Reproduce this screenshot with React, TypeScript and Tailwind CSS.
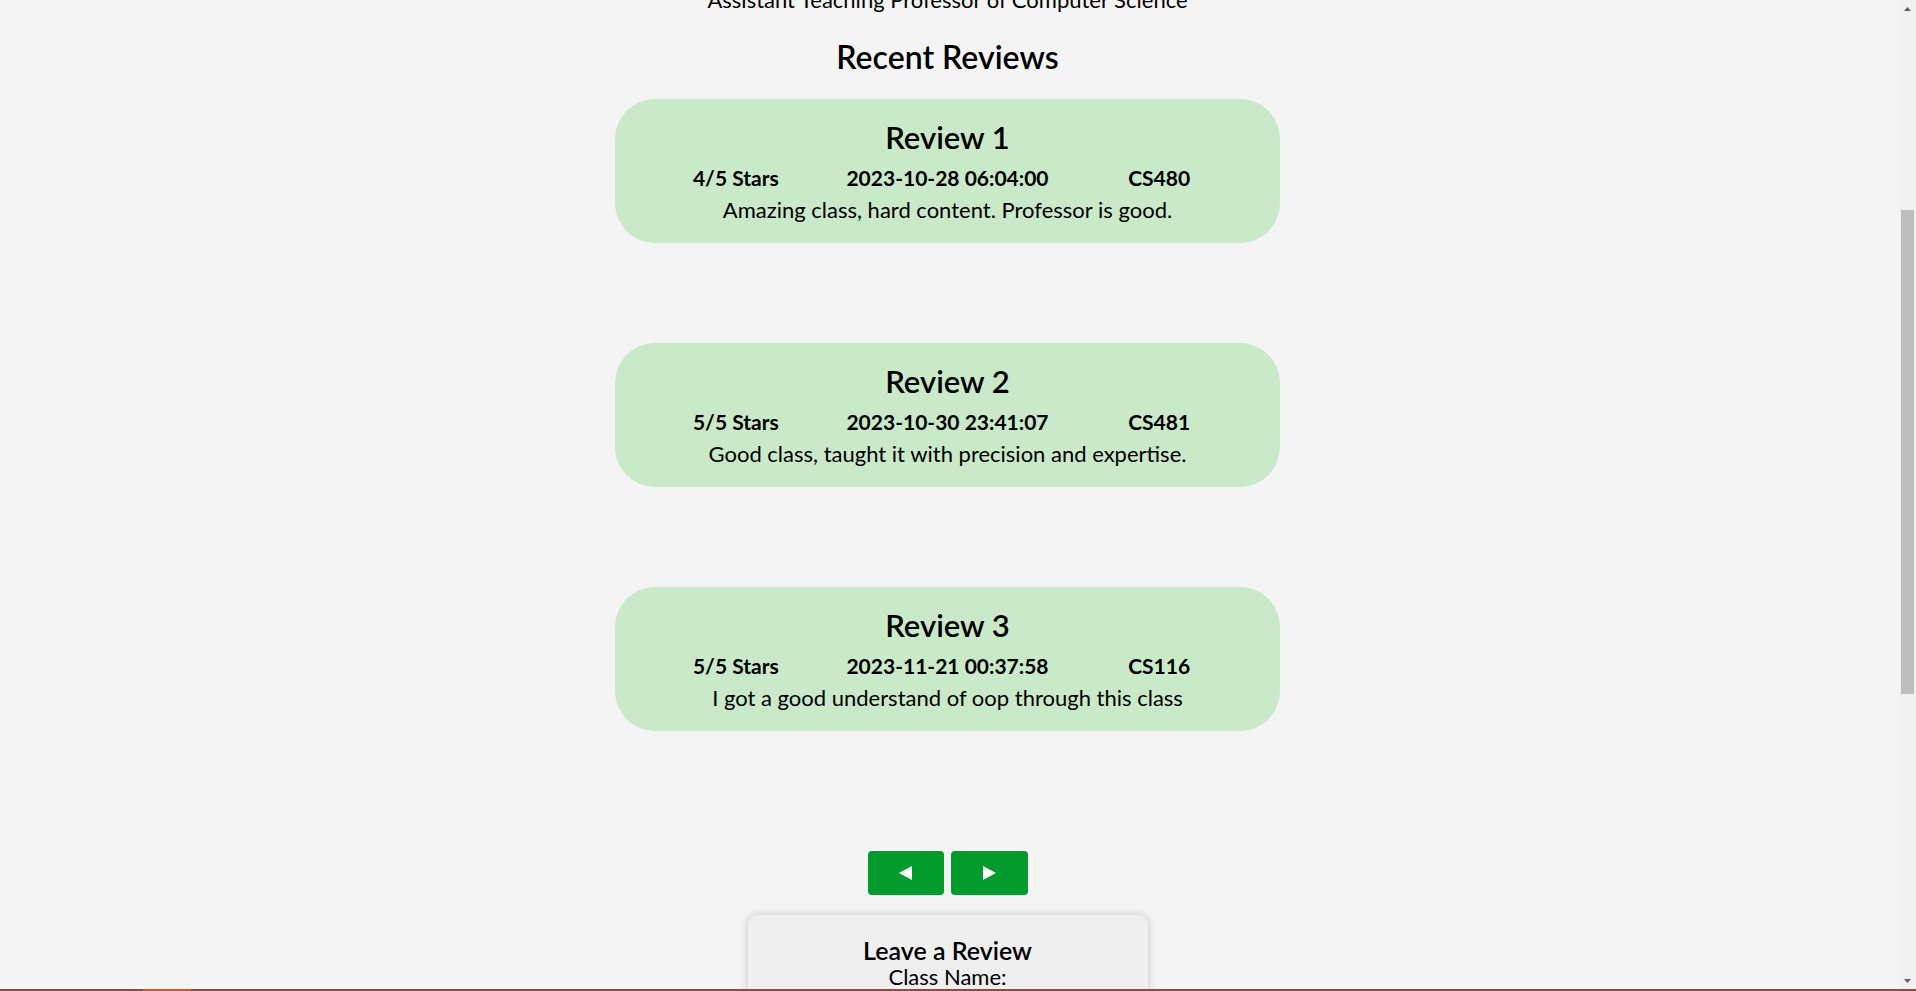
import { useLayoutEffect, useRef } from 'react';

const reviews = [
  { title: 'Review 1', stars: '4/5 Stars', date: '2023-10-28 06:04:00', course: 'CS480', text: 'Amazing class, hard content. Professor is good.' },
  { title: 'Review 2', stars: '5/5 Stars', date: '2023-10-30 23:41:07', course: 'CS481', text: 'Good class, taught it with precision and expertise.' },
  { title: 'Review 3', stars: '5/5 Stars', date: '2023-11-21 00:37:58', course: 'CS116', text: 'I got a good understand of oop through this class' },
];

function ReviewCard({ review }: { review: (typeof reviews)[number] }) {
  return (
    <div className="w-[665px] rounded-[40px] bg-[#c9e9c9] px-[15px] pt-[19px] pb-[20px] text-center text-black">
      <h3 className="text-[31px] leading-[38px] font-semibold">{review.title}</h3>
      <div className="mt-[10px] grid grid-cols-3 text-[21px] leading-[24px] font-bold">
        <span>{review.stars}</span>
        <span>{review.date}</span>
        <span>{review.course}</span>
      </div>
      <p className="mt-[7px] text-[22px] leading-[26px]">{review.text}</p>
    </div>
  );
}

function Scrollbar() {
  return (
    <div className="w-[17px] bg-[#f1f1f1] flex flex-col">
      <div className="h-[17px] flex items-center justify-center">
        <svg width="7" height="4" viewBox="0 0 7 4">
          <path d="M3.5 0 L7 4 L0 4 Z" fill="#606060" />
        </svg>
      </div>
      <div className="flex-1">
        <div className="mt-[193px] mx-[2px] h-[484px] bg-[#bebebe]" />
      </div>
      <div className="h-[17px] flex items-center justify-center">
        <svg width="7" height="4" viewBox="0 0 7 4">
          <path d="M0 0 L7 0 L3.5 4 Z" fill="#606060" />
        </svg>
      </div>
    </div>
  );
}

export default function App() {
  const scrollRef = useRef<HTMLDivElement>(null);
  const headRef = useRef<HTMLHeadingElement>(null);

  useLayoutEffect(() => {
    const c = scrollRef.current;
    const h = headRef.current;
    if (c && h) c.scrollTop += h.getBoundingClientRect().top - 38;
  }, []);

  return (
    <div className="h-screen flex flex-col bg-[#f4f4f4] font-['Lato',sans-serif] text-black">
      <div className="flex-1 min-h-0 flex">
        <div ref={scrollRef} className="flex-1 overflow-hidden pr-[4px]">
          {/* profile header, scrolled out of view */}
          <header className="flex flex-col items-center pt-[40px]">
            <div className="w-[200px] h-[200px] rounded-full bg-[#d9d9d9]" />
            <h1 className="mt-[30px] text-[40px] leading-[48px] font-bold">Professor Profile</h1>
          </header>
          <p className="mt-[10px] text-center text-[22px] leading-[28px]">Assistant Teaching Professor of Computer Science</p>

          <h2 ref={headRef} className="mt-[24px] text-center text-[32px] leading-[38px] font-semibold">
            Recent Reviews
          </h2>

          <div className="mt-[23px] flex flex-col items-center gap-[100px]">
            {reviews.map((r) => (
              <ReviewCard key={r.title} review={r} />
            ))}
          </div>

          <div className="mt-[120px] flex justify-center gap-[7px]">
            <button className="w-[76px] h-[44px] rounded-[4px] bg-[#039b2d] flex items-center justify-center">
              <svg width="13" height="14" viewBox="0 0 13 14">
                <path d="M13 0 L0 7 L13 14 Z" fill="#fff" />
              </svg>
            </button>
            <button className="w-[77px] h-[44px] rounded-[4px] bg-[#039b2d] flex items-center justify-center">
              <svg width="13" height="14" viewBox="0 0 13 14">
                <path d="M0 0 L13 7 L0 14 Z" fill="#fff" />
              </svg>
            </button>
          </div>

          <form className="mx-auto mt-[20px] mb-[90px] w-[400px] rounded-[10px] bg-[#efefef] shadow-[0_0_8px_rgba(0,0,0,0.18)] px-[30px] pt-[21px] pb-[30px] flex flex-col items-center text-center">
            <h3 className="text-[25px] leading-[28px] font-semibold">Leave a Review</h3>
            <label className="text-[22px] leading-[26px]">Class Name:</label>
            <input className="mt-[6px] w-full h-[36px] rounded-[4px] border border-[#ccc] bg-white px-[8px]" />
            <label className="mt-[14px] text-[22px] leading-[26px]">Rating:</label>
            <select className="mt-[6px] w-full h-[36px] rounded-[4px] border border-[#ccc] bg-white px-[8px]">
              <option>5</option>
              <option>4</option>
              <option>3</option>
              <option>2</option>
              <option>1</option>
            </select>
            <label className="mt-[14px] text-[22px] leading-[26px]">Review:</label>
            <textarea className="mt-[6px] w-full h-[200px] rounded-[4px] border border-[#ccc] bg-white px-[8px]" />
            <button type="button" className="mt-[20px] w-[120px] h-[44px] rounded-[4px] bg-[#039b2d] text-white text-[18px] font-semibold">
              Submit
            </button>
          </form>
        </div>
        <Scrollbar />
      </div>
      <div className="h-[2px] flex bg-[#8a4d42]">
        <div className="w-[143px]" />
        <div className="w-[48px] bg-[#c4602a]" />
      </div>
    </div>
  );
}
